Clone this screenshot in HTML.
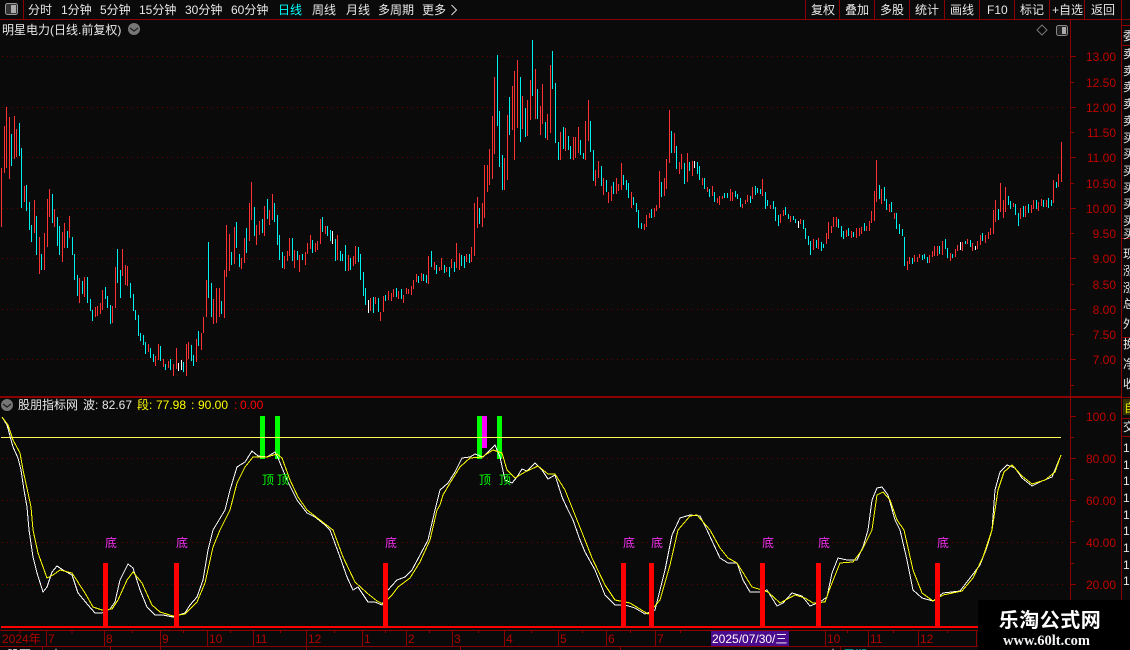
<!DOCTYPE html>
<html><head><meta charset="utf-8"><style>
html,body{margin:0;padding:0;background:#0a0a0a}
svg{display:block;position:absolute;left:0;top:0}
text{font-family:"Liberation Sans","WenQuanYi Zen Hei","Noto Sans CJK SC",sans-serif;font-size:12px}
.w{fill:#e8e8e8}.a{fill:#c00000;font-size:12px;text-anchor:end}.t{fill:#b00000;font-size:12px}
</style></head><body>
<svg width="1130" height="650" viewBox="0 0 1130 650">
<rect width="1130" height="650" fill="#0a0a0a"/>
<!-- grid -->
<g stroke="#6a0000" stroke-dasharray="1 4" fill="none" shape-rendering="crispEdges">
<path d="M2 56.5H1066M2 107.5H1066M2 157.5H1066M2 208.5H1066M2 258.5H1066M2 309.5H1066M2 359.5H1066M2 458.5H1066M2 500.5H1066M2 542.5H1066M2 584.5H1066"/>
</g>
<!-- frame -->
<g stroke="#8b0000" fill="none" shape-rendering="crispEdges">
<path d="M0 19.5H1130M23.5 0V19M805.5 0V19M839.5 0V19M874.5 0V19M909.5 0V19M944.5 0V19M979.5 0V19M1014.5 0V19M1049.5 0V19M1084.5 0V19M1121.5 0V650"/>
<path d="M1070.5 19V627" stroke-width="1"/>
<path d="M0 396.5H1121M0 397.5H1121"/>
<path d="M1121 25.5H1130M1121 45.5H1130M1121 238.5H1130M1121 337.5H1130M1121 397.5H1130M1121 418.5H1130M1121 436.5H1130"/>
<path d="M1071 56.5h5M1071 82.5h3M1071 107.5h5M1071 132.5h3M1071 157.5h5M1071 183.5h3M1071 208.5h5M1071 233.5h3M1071 258.5h5M1071 284.5h3M1071 309.5h5M1071 334.5h3M1071 359.5h5M1071 385.5h3M1071 416.5h5M1071 437.5h3M1071 458.5h5M1071 479.5h3M1071 500.5h5M1071 521.5h3M1071 542.5h5M1071 563.5h3M1071 584.5h5M1071 605.5h3"/>
<path d="M0 630.5H978M0 646.5H978M46.5 630V646M104.5 630V646M160.5 630V646M207.5 630V646M253.5 630V646M306.5 630V646M362.5 630V646M406.5 630V646M452.5 630V646M504.5 630V646M558.5 630V646M606.5 630V646M655.5 630V646M825.5 630V646M868.5 630V646M918.5 630V646M976.5 630V646"/>
<path d="M20 630.5v3M72 630.5v3M132.5 630v3M183.5 630v3M230.5 630v3M280.5 630v3M334.5 630v3M385.5 630v3M429.5 630v3M478.5 630v3M531.5 630v3M582.5 630v3M630.5 630v3M680.5 630v3M847.5 630v3M893.5 630v3M947.5 630v3"/>
<path d="M42.5 647V650M110.5 647V650M160.5 647V650M306.5 647V650M460.5 647V650M620.5 647V650M840.5 647V650"/>
</g>
<!-- left icon -->
<rect x="5.5" y="3.5" width="12" height="11" rx="2" fill="#333" stroke="#999"/><rect x="11" y="5" width="5" height="8" fill="#aaa"/>
<!-- toolbar -->
<g class="w">
<text x="28" y="14" class="w">分时</text><text x="61" y="14" class="w">1分钟</text><text x="100" y="14" class="w">5分钟</text><text x="139" y="14" class="w">15分钟</text><text x="185" y="14" class="w">30分钟</text><text x="231" y="14" class="w">60分钟</text>
<text x="278" y="14" style="fill:#00ffff">日线</text><text x="312" y="14" class="w">周线</text><text x="346" y="14" class="w">月线</text><text x="378" y="14" class="w">多周期</text><text x="422" y="14" class="w">更多</text>
<path d="M451.5 5l5 5-5 5" fill="none" stroke="#ddd"/>
<text x="811" y="14" class="w">复权</text><text x="845" y="14" class="w">叠加</text><text x="880" y="14" class="w">多股</text><text x="915" y="14" class="w">统计</text><text x="950" y="14" class="w">画线</text><text x="987" y="14" class="w">F10</text><text x="1020" y="14" class="w">标记</text><text x="1052" y="14" class="w">+自选</text><text x="1091" y="14" class="w">返回</text>
</g>
<text x="2" y="34" class="w">明星电力(日线.前复权)</text>
<circle cx="134" cy="29" r="6" fill="#777"/><path d="M130 28l4 3 4-3" fill="none" stroke="#222" stroke-width="1.3"/>
<path d="M1042 25l5 5-5 5-5-5z" fill="none" stroke="#777"/>
<rect x="1056.5" y="25.5" width="11" height="10" rx="2" fill="#222" stroke="#888"/><rect x="1062" y="27" width="4" height="7" fill="#aaa"/>
<!-- candles -->
<g fill="none" stroke-width="1" shape-rendering="crispEdges">
<path stroke="#ff3333" d="M1.5 168V227M4.5 126V173M6.5 107V168M9.5 117V179M14.5 116V159M16.5 129V157M24.5 186V202M34.5 200V233M39.5 237V274M44.5 233V270M47.5 199V247M49.5 189V217M54.5 209V227M62.5 232V262M64.5 223V248M69.5 216V238M79.5 278V303M84.5 277V297M95.5 307V317M97.5 306V316M100.5 303V314M102.5 290V310M112.5 306V323M115.5 267V308M122.5 249V276M125.5 265V285M127.5 266V286M148.5 344V352M155.5 356V366M158.5 344V360M163.5 359V367M168.5 361V368M173.5 364V376M176.5 348V369M186.5 344V376M188.5 342V359M196.5 339V362M201.5 333V350M203.5 317V333M206.5 280V317M213.5 299V324M216.5 288V323M219.5 288V317M224.5 270V318M226.5 225V277M229.5 234V271M234.5 227V264M241.5 258V269M244.5 238V263M249.5 203V241M251.5 182V220M256.5 225V245M259.5 221V235M264.5 206V236M269.5 210V225M272.5 194V220M284.5 256V269M287.5 251V261M289.5 238V256M294.5 250V268M299.5 255V272M305.5 252V265M307.5 243V254M310.5 235V249M315.5 243V252M317.5 241V250M320.5 219V244M325.5 226V234M337.5 235V260M348.5 255V271M353.5 256V266M355.5 246V264M370.5 298V311M375.5 297V304M380.5 312V321M383.5 296V312M388.5 291V300M391.5 293V301M393.5 289V297M398.5 291V299M403.5 295V303M406.5 288V294M408.5 289V294M411.5 286V295M413.5 280V289M416.5 274V282M421.5 273V281M428.5 256V284M434.5 262V270M439.5 267V271M441.5 258V270M446.5 267V272M451.5 259V268M456.5 243V268M459.5 253V270M466.5 254V262M471.5 247V262M474.5 203V256M477.5 197V228M482.5 203V227M484.5 165V218M487.5 165V192M489.5 149V185M492.5 116V179M494.5 77V154M504.5 158V190M507.5 115V180M512.5 86V130M514.5 71V160M517.5 60V128M522.5 96V129M527.5 100V136M530.5 80V120M535.5 69V119M540.5 106V135M542.5 84V124M547.5 114V140M550.5 65V133M560.5 132V160M565.5 128V151M573.5 137V160M575.5 137V158M578.5 127V153M585.5 121V160M588.5 100V141M595.5 170V186M598.5 161V178M603.5 178V195M608.5 192V203M611.5 186V201M616.5 178V194M618.5 184V191M621.5 163V190M631.5 192V208M644.5 224V230M646.5 215V227M649.5 213V218M654.5 208V217M656.5 205V211M659.5 171V208M664.5 178V196M666.5 159V189M669.5 110V163M674.5 133V153M679.5 162V174M681.5 154V169M687.5 153V182M692.5 161V176M702.5 178V185M707.5 187V192M712.5 186V196M717.5 198V203M719.5 196V205M722.5 196V199M730.5 189V201M732.5 192V201M742.5 204V208M745.5 200V204M747.5 195V202M752.5 187V199M762.5 179V196M770.5 205V209M780.5 214V223M783.5 210V216M790.5 216V222M800.5 219V224M813.5 239V250M818.5 238V249M826.5 233V244M828.5 222V239M831.5 226V233M833.5 217V227M836.5 217V227M846.5 230V237M851.5 231V238M856.5 228V238M859.5 228V236M861.5 227V234M866.5 226V231M869.5 221V231M871.5 211V223M874.5 191V221M876.5 160V202M881.5 189V204M889.5 204V212M894.5 213V219M907.5 261V270M909.5 257V264M914.5 255V262M917.5 257V262M919.5 254V258M929.5 255V263M932.5 251V257M934.5 246V256M937.5 246V256M942.5 241V255M950.5 253V261M955.5 249V257M957.5 245V251M962.5 242V251M967.5 239V244M972.5 243V251M977.5 241V249M980.5 235V245M985.5 235V243M988.5 232V239M990.5 228V235M993.5 210V234M995.5 200V222M1000.5 183V212M1003.5 200V218M1005.5 187V212M1013.5 203V207M1020.5 208V219M1025.5 206V217M1031.5 205V213M1033.5 200V209M1038.5 202V211M1041.5 199V206M1046.5 200V207M1053.5 180V203M1058.5 174V187M1061.5 142V182"/>
<path stroke="#00f0f0" d="M11.5 134V166M19.5 123V156M21.5 148V208M26.5 185V211M29.5 202V230M31.5 225V242M36.5 216V255M41.5 254V270M52.5 194V223M57.5 217V246M59.5 226V255M67.5 231V248M72.5 237V255M74.5 254V280M77.5 275V296M82.5 281V294M87.5 277V303M90.5 299V311M92.5 310V321M105.5 287V299M107.5 296V308M110.5 305V324M117.5 249V283M120.5 270V298M130.5 283V298M133.5 294V311M135.5 310V320M138.5 315V336M140.5 333V341M143.5 335V345M145.5 342V354M150.5 348V358M153.5 354V362M160.5 346V361M165.5 364V370M170.5 359V370M183.5 362V372M191.5 345V361M193.5 355V366M198.5 331V346M208.5 242V298M211.5 283V317M221.5 301V314M231.5 252V265M236.5 222V248M239.5 254V267M246.5 228V253M254.5 207V236M262.5 219V233M267.5 199V219M274.5 203V222M277.5 215V245M279.5 235V260M282.5 252V268M292.5 238V261M297.5 251V260M302.5 254V260M312.5 240V253M322.5 217V232M327.5 226V236M330.5 230V241M335.5 239V261M340.5 251V261M342.5 254V261M345.5 245V271M350.5 258V270M358.5 247V262M360.5 254V280M363.5 272V296M365.5 288V305M373.5 297V313M378.5 298V312M385.5 295V301M396.5 288V297M401.5 289V299M418.5 276V283M423.5 274V281M426.5 275V283M431.5 251V267M436.5 265V274M444.5 265V273M449.5 267V277M454.5 262V272M461.5 255V266M464.5 256V268M469.5 254V263M479.5 208V224M497.5 55V126M499.5 111V167M502.5 155V190M509.5 97V135M520.5 77V142M525.5 108V137M532.5 40V96M537.5 89V119M545.5 122V138M552.5 51V89M555.5 83V143M558.5 142V160M563.5 127V149M568.5 136V150M570.5 146V159M580.5 140V155M583.5 153V159M590.5 121V152M593.5 150V181M601.5 166V186M606.5 180V192M613.5 182V194M623.5 175V185M626.5 180V190M628.5 183V198M633.5 197V205M636.5 203V212M638.5 210V228M641.5 223V229M651.5 209V218M661.5 182V197M671.5 131V153M676.5 146V169M684.5 163V184M689.5 162V171M697.5 162V174M699.5 166V180M704.5 178V189M709.5 189V197M714.5 192V202M724.5 193V198M727.5 193V198M735.5 191V197M737.5 194V199M740.5 198V207M750.5 196V203M755.5 186V195M757.5 188V193M760.5 189V194M765.5 192V209M767.5 200V206M773.5 201V209M775.5 207V221M778.5 215V226M785.5 207V215M788.5 214V219M793.5 216V220M795.5 219V223M803.5 220V229M805.5 228V239M808.5 236V245M810.5 241V255M816.5 240V248M821.5 242V251M823.5 244V248M838.5 219V228M841.5 226V237M843.5 231V239M848.5 228V236M853.5 232V237M864.5 223V231M879.5 185V199M884.5 187V201M886.5 199V210M891.5 202V212M896.5 213V229M899.5 224V234M902.5 229V236M904.5 237V266M912.5 258V264M922.5 255V260M924.5 254V259M927.5 257V263M939.5 246V254M945.5 239V249M947.5 248V258M952.5 254V258M965.5 241V244M970.5 240V247M982.5 233V241M998.5 209V220M1008.5 196V205M1010.5 201V209M1015.5 204V215M1018.5 213V226M1023.5 206V217M1028.5 204V213M1036.5 200V209M1043.5 200V207M1048.5 198V208M1051.5 200V206M1056.5 182V188"/>
<path stroke="#ffffff" d="M178.5 363V371M181.5 360V370M332.5 231V244M368.5 300V313M694.5 161V168M798.5 221V228M960.5 242V250M975.5 246V250"/>
</g>
<!-- indicator bars -->
<g shape-rendering="crispEdges">
<rect x="260" y="416" width="5" height="43" fill="#00ff00"/><rect x="275" y="416" width="5" height="43" fill="#00ff00"/><rect x="477" y="416" width="5" height="43" fill="#00ff00"/><rect x="482" y="416" width="5" height="32" fill="#ff00ff"/><rect x="497" y="416" width="5" height="43" fill="#00ff00"/>
</g>
<path d="M1 437.5H1061" stroke="#ffff55" fill="none" shape-rendering="crispEdges"/>
<g fill="none" stroke-width="1" stroke-linejoin="round" shape-rendering="crispEdges">
<polyline stroke="#ffffff" points="2,417 7,425 13,447 18,458 21,470 24,490 27,507 29,530 33,557 37,573 43,592 47,587 52,572 57,566 63,570 72,575 78,593 88,605 95,613 102,613 110,609 115,602 120,580 128,564 133,568 140,590 147,607 155,615 163,615 173,617 185,613 190,605 197,597 203,580 208,550 213,530 225,510 230,490 237,467 245,462 252,451 258,456 267,457 275,452 278,458 287,480 297,500 307,513 315,517 325,525 330,530 340,557 347,577 353,590 358,587 368,602 375,602 382,605 388,590 397,580 405,577 412,570 420,555 428,540 435,510 440,490 448,483 455,472 462,458 470,457 475,454 483,457 490,450 495,445 500,457 505,480 512,483 517,477 522,469 527,471 535,463 542,470 548,479 555,475 562,497 568,510 573,520 580,540 585,552 595,570 605,595 615,605 625,605 635,608 645,614 655,610 665,570 672,535 680,518 690,515 700,516 707,530 713,543 720,558 728,563 737,563 743,580 750,592 760,592 767,590 777,606 783,603 792,593 802,596 810,606 820,602 827,597 832,573 838,558 847,560 857,560 863,547 868,530 872,500 877,488 882,487 888,495 895,520 900,530 907,560 913,590 922,598 933,601 943,593 960,591 970,578 980,565 987,547 992,530 995,490 1000,472 1007,465 1015,468 1022,478 1032,486 1042,481 1052,477 1057,465 1061,455"/>
<polyline stroke="#ffff00" points="2,417 8,425 13,440 20,453 23,470 28,493 31,507 33,530 38,553 47,578 53,575 60,570 72,573 85,593 93,607 102,610 112,609 118,600 127,580 133,572 142,583 152,605 160,612 173,616 185,614 197,602 205,583 213,547 220,530 230,510 237,483 245,467 253,457 267,457 277,454 282,458 290,480 298,497 307,510 320,520 333,530 343,557 355,582 367,593 377,601 383,604 392,595 398,587 410,578 420,562 430,540 437,510 440,505 443,495 450,483 460,467 470,458 482,457 493,450 502,453 507,470 515,478 525,472 538,466 548,474 555,474 565,490 573,510 577,520 585,540 592,558 605,585 615,600 630,603 648,614 660,600 670,565 678,530 690,516 697,515 710,530 720,548 728,558 737,563 752,587 762,590 768,592 780,603 795,595 805,598 813,603 825,602 830,588 840,563 853,562 862,550 872,530 877,495 883,492 890,500 897,520 904,530 913,570 922,593 933,601 943,595 962,591 973,578 983,557 992,530 998,490 1004,472 1012,465 1022,476 1032,484 1045,480 1055,472 1061,455"/>
</g>
<g shape-rendering="crispEdges" fill="#ff0000">
<rect x="103" y="563" width="5" height="64"/><rect x="174" y="563" width="5" height="64"/><rect x="383" y="563" width="5" height="64"/><rect x="621" y="563" width="5" height="64"/><rect x="649" y="563" width="5" height="64"/><rect x="760" y="563" width="5" height="64"/><rect x="816" y="563" width="5" height="64"/><rect x="935" y="563" width="5" height="64"/>
<rect x="1" y="626" width="1120" height="2"/>
</g>
<g>
<text x="105" y="547" fill="#f030f0">底</text><text x="176" y="547" fill="#f030f0">底</text><text x="385" y="547" fill="#f030f0">底</text><text x="623" y="547" fill="#f030f0">底</text><text x="651" y="547" fill="#f030f0">底</text><text x="762" y="547" fill="#f030f0">底</text><text x="818" y="547" fill="#f030f0">底</text><text x="937" y="547" fill="#f030f0">底</text>
</g>
<text x="262" y="484" fill="#00ff00">顶</text><text x="277" y="484" fill="#00ff00">顶</text><text x="479" y="484" fill="#00ff00">顶</text><text x="499" y="484" fill="#00ff00">顶</text>
<!-- indicator header -->
<circle cx="7" cy="405" r="6" fill="#777"/><path d="M3 404l4 3 4-3" fill="none" stroke="#222" stroke-width="1.3"/>
<text x="18" y="409" class="w">股朋指标网</text><text x="83" y="409" class="w">波:</text><text x="102" y="409" class="w">82.67</text>
<text x="137" y="409" fill="#ffff00">段:</text><text x="156" y="409" fill="#ffff00">77.98</text><text x="191" y="409" fill="#ffff00">:</text><text x="198" y="409" fill="#ffff00">90.00</text><text x="234" y="409" fill="#ff0000">:</text><text x="240" y="409" fill="#ff0000">0.00</text>
<!-- axis labels -->
<text class="a" x="1116" y="61">13.00</text><text class="a" x="1116" y="87">12.50</text><text class="a" x="1116" y="112">12.00</text><text class="a" x="1116" y="137">11.50</text><text class="a" x="1116" y="162">11.00</text><text class="a" x="1116" y="188">10.50</text><text class="a" x="1116" y="213">10.00</text><text class="a" x="1116" y="238">9.50</text><text class="a" x="1116" y="263">9.00</text><text class="a" x="1116" y="289">8.50</text><text class="a" x="1116" y="314">8.00</text><text class="a" x="1116" y="339">7.50</text><text class="a" x="1116" y="364">7.00</text>
<text class="a" x="1116" y="421">100.0</text><text class="a" x="1116" y="463">80.00</text><text class="a" x="1116" y="505">60.00</text><text class="a" x="1116" y="547">40.00</text><text class="a" x="1116" y="589">20.00</text>
<!-- time axis -->
<text class="t" x="2" y="643">2024年</text><text class="t" x="48" y="643">7</text><text class="t" x="106" y="643">8</text><text class="t" x="162" y="643">9</text><text class="t" x="209" y="643">10</text><text class="t" x="255" y="643">11</text><text class="t" x="308" y="643">12</text><text class="t" x="364" y="643">1</text><text class="t" x="408" y="643">2</text><text class="t" x="454" y="643">3</text><text class="t" x="506" y="643">4</text><text class="t" x="560" y="643">5</text><text class="t" x="608" y="643">6</text><text class="t" x="657" y="643">7</text><text class="t" x="827" y="643">10</text><text class="t" x="870" y="643">11</text><text class="t" x="920" y="643">12</text>
<rect x="711" y="631" width="78" height="15" fill="#4a0c8c"/><text x="712" y="643" fill="#fff">2025/07/30/三</text>
<!-- right column -->
<g class="w">
<text x="1123" y="40" class="w">委</text><text x="1123" y="58" class="w">卖</text><text x="1123" y="75" class="w">卖</text><text x="1123" y="91" class="w">卖</text><text x="1123" y="108" class="w">卖</text><text x="1123" y="125" class="w">卖</text><text x="1123" y="142" class="w">买</text><text x="1123" y="158" class="w">买</text><text x="1123" y="175" class="w">买</text><text x="1123" y="192" class="w">买</text><text x="1123" y="208" class="w">买</text><text x="1123" y="225" class="w">买</text><text x="1123" y="238" class="w">买</text><text x="1123" y="258" class="w">现</text><text x="1123" y="275" class="w">涨</text><text x="1123" y="292" class="w">涨</text><text x="1123" y="308" class="w">总</text><text x="1123" y="328" class="w">外</text><text x="1123" y="348" class="w">换</text><text x="1123" y="368" class="w">净</text><text x="1123" y="388" class="w">收</text>
</g>
<rect x="1123" y="399" width="7" height="16" fill="#333300"/><text x="1124" y="412" fill="#e0e000">自</text><text x="1123" y="431" class="w">交</text>
<g class="w"><text x="1123" y="452" class="w">1</text><text x="1123" y="469" class="w">1</text><text x="1123" y="485" class="w">1</text><text x="1123" y="502" class="w">1</text><text x="1123" y="519" class="w">1</text><text x="1123" y="535" class="w">1</text><text x="1123" y="552" class="w">1</text><text x="1123" y="569" class="w">1</text><text x="1123" y="585" class="w">1</text></g>
<!-- bottom clipped -->
<text x="7" y="659" class="w">股票</text><text x="50" y="659" class="w">大</text><text x="827" y="659" class="w">大</text><text x="843" y="659" fill="#00ffff">周期</text>
<!-- watermark -->
<rect x="978" y="600" width="152" height="50" fill="#000"/>
<text x="1050" y="627" text-anchor="middle" style="font-size:20px;font-weight:bold;fill:#fff;letter-spacing:.5px;font-family:'Noto Sans CJK SC',sans-serif">乐淘公式网</text>
<text x="1046.5" y="645" text-anchor="middle" style="font-size:14.5px;font-weight:bold;fill:#f4f4f4;font-family:'Liberation Serif',serif">www.60lt.com</text>
</svg>
</body></html>
